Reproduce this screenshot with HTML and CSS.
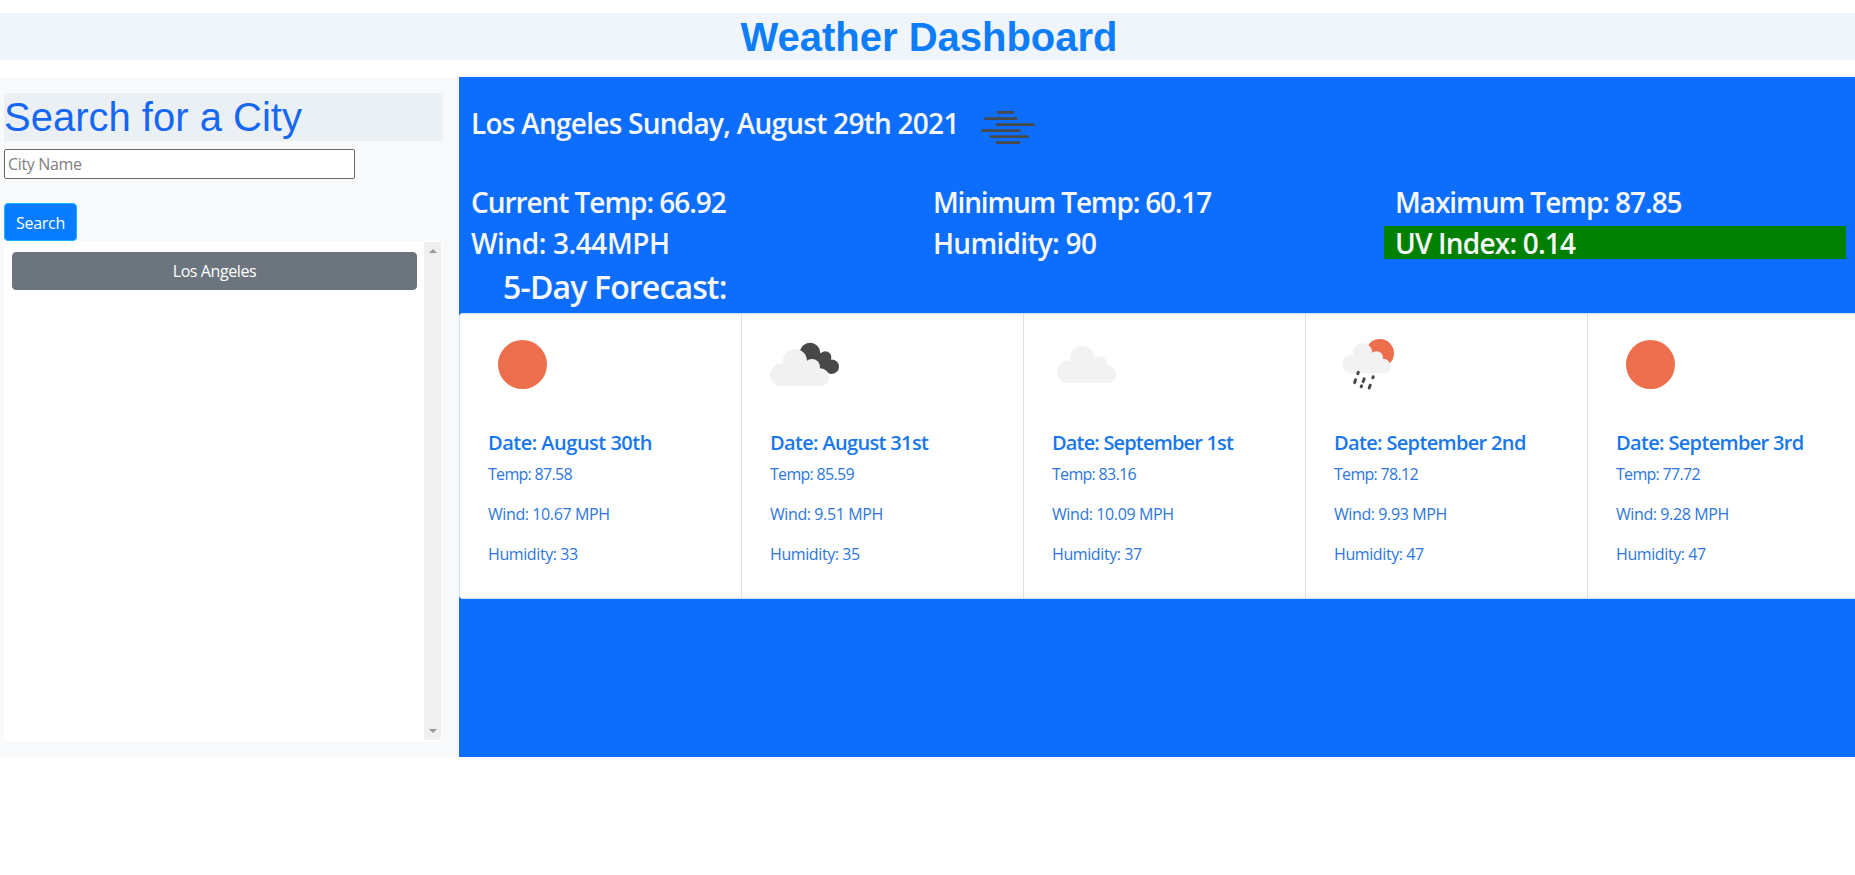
FILE: index.html
```html
<!DOCTYPE html>
<html lang="en">
<head>
<meta charset="utf-8">
<title>Weather Dashboard</title>
<link rel="stylesheet" href="styles.css">
</head>
<body>
<svg class="defs" aria-hidden="true">
  <symbol id="cloud" viewBox="0 0 70 70" overflow="visible">
    <circle cx="25" cy="31" r="12"/><circle cx="11.3" cy="44.7" r="11.3"/><circle cx="42" cy="37" r="8"/><circle cx="50.3" cy="47.2" r="8.9"/>
    <path d="M11 56V41L16 33L36 32L50 42V56Z"/>
  </symbol>
</svg>
<header class="title-bar"><h1>Weather Dashboard</h1></header>
<main class="layout">
  <aside class="sidebar">
    <h2 class="search-title">Search for a City</h2>
    <input class="city-input" type="text" placeholder="City Name">
    <button class="btn btn-search">Search</button>
    <div class="history">
      <div class="history-list"><button class="btn btn-city">Los Angeles</button></div>
      <div class="scrollbar"><i class="arrow-up"></i><i class="arrow-down"></i></div>
    </div>
  </aside>
  <section class="weather">
    <div class="current">
      <h3 class="place">Los Angeles Sunday, August 29th 2021</h3>
      <svg class="mist" width="56" height="34" viewBox="0 0 56 34" stroke="#484848" stroke-width="2.8" stroke-linecap="round">
        <path d="M18.2 2.4H32.8M5.6 8.7H36.2M17 14.7H53.6M2.4 20.7H39.4M11 26.7H47.6M17 32.6H39"/>
      </svg>
    </div>
    <div class="stats">
      <h3 class="temp">Current Temp: 66.92</h3><h3 class="temp-min">Minimum Temp: 60.17</h3><h3 class="temp">Maximum Temp: 87.85</h3>
      <h3 class="wind">Wind: 3.44MPH</h3><h3 class="humidity">Humidity: 90</h3><h3 class="uv">UV Index: 0.14</h3>
    </div>
    <h2 class="forecast-title">5-Day Forecast:</h2>
    <div class="cards">
      <article class="card august">
        <svg class="icon" viewBox="0 0 70 100"><circle cx="34.5" cy="34.5" r="24.5" fill="#ec6e4c"/></svg>
        <h5>Date: August 30th</h5><p class="t">Temp: 87.58</p><p>Wind: 10.67 MPH</p><p>Humidity: 33</p>
      </article>
      <article class="card">
        <svg class="icon" viewBox="0 0 70 100">
          <g fill="#484848"><circle cx="40" cy="23" r="10.3"/><circle cx="55.3" cy="27.3" r="6"/><circle cx="61.7" cy="36.7" r="7.3"/><path d="M40 20L54 24L63 34L61 44L48 38L36 26Z"/></g>
          <use href="#cloud" width="70" height="70" fill="#f1f1f1"/>
        </svg>
        <h5>Date: August 31st</h5><p class="t">Temp: 85.59</p><p>Wind: 9.51 MPH</p><p>Humidity: 35</p>
      </article>
      <article class="card tight">
        <svg class="icon" viewBox="0 0 70 100"><use href="#cloud" x="5" y="-3" width="70" height="70" fill="#f2f2f2"/></svg>
        <h5>Date: September 1st</h5><p class="t">Temp: 83.16</p><p>Wind: 10.09 MPH</p><p>Humidity: 37</p>
      </article>
      <article class="card">
        <svg class="icon" viewBox="0 0 70 100">
          <circle cx="45.8" cy="23.2" r="14.2" fill="#ec6e4c"/>
          <use href="#cloud" x="8.3" y="-2.4" width="57" height="57" fill="#f2f2f2"/>
          <path d="M24.3 42.4L23.8 43.6M21.6 49.8L20.6 52.6M30.2 48.8L29.2 51.6M39.2 46.7L38.8 47.8M27.6 55.8L27.2 56.8M36.2 55.2L35.2 58" stroke="#484848" stroke-width="3" stroke-linecap="round"/>
        </svg>
        <h5>Date: September 2nd</h5><p class="t">Temp: 78.12</p><p>Wind: 9.93 MPH</p><p>Humidity: 47</p>
      </article>
      <article class="card">
        <svg class="icon" viewBox="0 0 70 100"><circle cx="34.5" cy="34.5" r="24.5" fill="#ec6e4c"/></svg>
        <h5>Date: September 3rd</h5><p class="t">Temp: 77.72</p><p>Wind: 9.28 MPH</p><p>Humidity: 47</p>
      </article>
    </div>
  </section>
</main>
</body>
</html>
```

FILE: styles.css
```css
* { box-sizing: border-box; }
body { margin: 0; padding-top: 13px; background: #fff; font: 16px/24px "Open Sans", "Noto Sans", sans-serif; overflow: hidden; }
h1, h2, h3, h5, p { margin: 0; white-space: nowrap; }
.defs { position: absolute; width: 0; height: 0; }

.title-bar { height: 47px; background: #eff5fa; text-align: center; }
.title-bar h1 { font: bold 40px/48px "Liberation Sans", Arial, sans-serif; color: #0d7dfa; padding-left: 3px; }

.layout { display: flex; margin-top: 17px; height: 680px; }

.sidebar { width: 459px; flex: none; padding: 16px 16px 16px 4px; background: #f7f9fb; display: flex; flex-direction: column; align-items: flex-start; }
.search-title { width: 439px; height: 48px; background: #ebf0f4; color: #1667f2; font: 40px/48px "Liberation Sans", Arial, sans-serif; }
.city-input { width: 351px; height: 30px; margin-top: 8px; padding: 1px 3px; border: 1px solid #686868; border-radius: 2px; background: #fff; font: 16px/24px "Open Sans", "Noto Sans", sans-serif; letter-spacing: -0.35px; }
.city-input::placeholder { color: #808080; opacity: 1; }
.btn { height: 38px; padding: 0; border: 1px solid; border-radius: 4px; color: #fff; font: 16px/24px "Open Sans", "Noto Sans", sans-serif; letter-spacing: -0.3px; }
.btn-search { width: 73px; margin-top: 24px; padding-top: 1px; background: #087cff; border-color: #17b2ff; }
.history { width: 438px; height: 500px; padding: 1px 0; background: #fff; display: flex; }
.history-list { flex: 1; padding: 10px 7px 0 8px; }
.btn-city { width: 100%; background: #6c757d; border-color: #6c757d; letter-spacing: -0.4px; }
.scrollbar { width: 17px; margin-right: 1px; background: #f0f0f0; display: flex; flex-direction: column; justify-content: space-between; align-items: center; padding: 7px 0; }
.arrow-up, .arrow-down { border: 4px solid transparent; }
.arrow-up { border-top: 0; border-bottom-color: #999; }
.arrow-down { border-bottom: 0; border-top-color: #999; }

.weather { width: 1396px; flex: none; background: #0d6efd; color: #f6f8fc; overflow: hidden; }
.weather h3 { font-size: 28px; line-height: 33px; height: 33px; padding-top: 1px; font-weight: 600; }
.current { height: 108px; padding: 29px 12px 0; display: flex; align-items: flex-start; }
.weather .place { width: 509px; letter-spacing: -0.74px; }
.mist { margin-top: 4px; }
.stats { display: grid; grid-template-columns: repeat(3, 462px); gap: 8px 0; padding-left: 1px; }
.stats h3 { padding-left: 11px; }
.stats .temp { letter-spacing: -1.05px; }
.stats .temp-min { letter-spacing: -1.18px; }
.stats .wind { letter-spacing: -0.42px; }
.stats .humidity { letter-spacing: -0.7px; }
.stats .uv { background: green; letter-spacing: -0.8px; }
.forecast-title { margin: 8px 0 0 44px; padding-top: 1px; font-size: 32px; line-height: 38px; font-weight: 600; letter-spacing: -0.85px; height: 46px; }
.cards { width: 1411px; height: 286px; display: flex; border: 1px solid #d5e0ee; border-right: 0; border-radius: 4px; background: #fff; }
.card { width: 282px; flex: none; padding: 16px 0 0 28px; border-right: 1px solid #dcdee0; color: #2d76dc; }
.icon { display: block; width: 70px; height: 101px; padding-bottom: 1px; }
.card h5 { margin-bottom: 7px; font-size: 20px; line-height: 24px; font-weight: 600; color: #1877ec; letter-spacing: -0.66px; }
.august h5 { letter-spacing: -0.5px; }
.tight h5 { letter-spacing: -0.83px; }
.card p { margin-bottom: 16px; letter-spacing: -0.4px; }
.card .t { letter-spacing: -0.7px; }
```
